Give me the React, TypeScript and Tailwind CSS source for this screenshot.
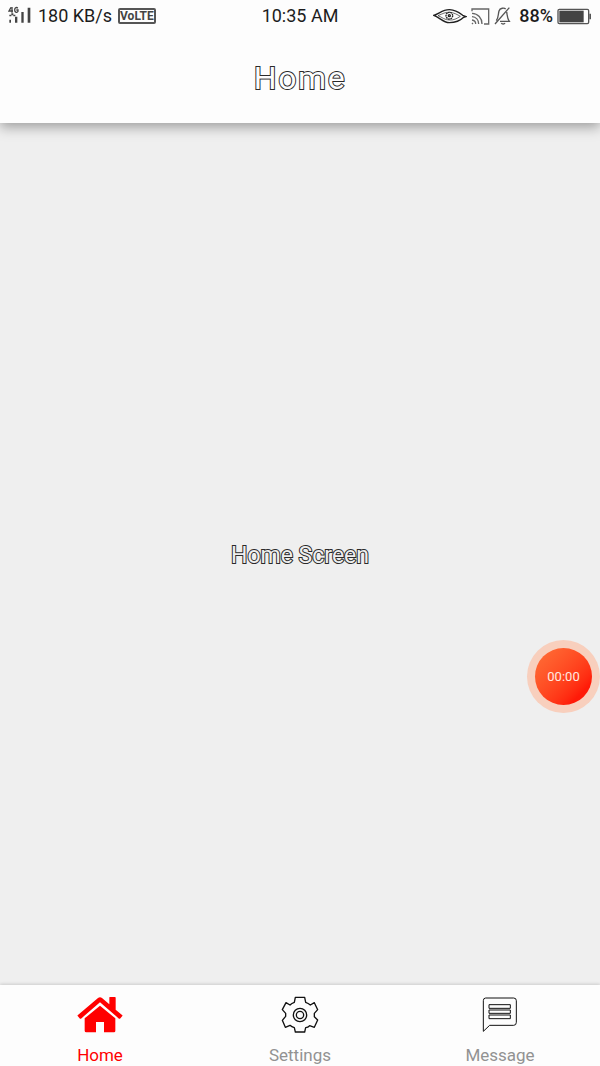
import type { ReactNode } from "react";

const outline = "antialiased [-webkit-text-stroke:2px_#2a2a2a] [paint-order:stroke_fill]";

function SignalIcon() {
  return (
    <svg width="24" height="20" viewBox="0 0 72 60" aria-label="4G signal" fill="#444">
      <path d="M9 4 3 15h12M12 3v17M29 7c-2-4-9-3-9 5s8 9 10 4v-4h-5" fill="none" stroke="#444" strokeWidth="4" />
      <path d="M4 26h6v5H4zM10 22h6v6h-6zM16 26h6v5h-6zM4 41h5v9H4zM21 32h7v18h-7zM40 18h7v32h-7zM59 5h8v45h-8z" />
    </svg>
  );
}

function EyeIcon() {
  return (
    <svg width="34" height="16" viewBox="0 0 102 48" fill="none" stroke="#222" strokeWidth="4" aria-hidden="true">
      <path d="M2 22C18 18 29 4 50 5c20 1 30 10 39 17l10 4-7 2C81 39 70 44 49 44 30 44 20 28 2 22Z" />
      <path d="M15 23C30 17 36 12 50 13s23 7 32 12c-11 7-20 12-33 11-14 0-21-8-34-13Z" strokeWidth="2" />
      <circle cx="49" cy="23" r="10" strokeDasharray="5 2" />
      <circle cx="49" cy="23" r="3" />
    </svg>
  );
}

function CastIcon() {
  return (
    <svg width="19" height="17" viewBox="0 0 57 51" fill="none" stroke="#666" strokeWidth="4" aria-hidden="true">
      <path d="M3 10V3h50v45H39M3 16c18 1 30 14 30 32M3 26c12 1 20 10 20 22M3 36c7 1 11 6 11 12M3 45l3 3" />
    </svg>
  );
}

function MutedBellIcon() {
  return (
    <svg width="17" height="18" viewBox="0 0 51 54" fill="none" stroke="#555" strokeWidth="4" aria-hidden="true">
      <path d="M46 2 3 51M35 6c-4-4-17-4-20 6-3 10-1 20-8 29M38 15c2 10 1 18 8 28H18M22 48c2 4 9 4 11 0" />
    </svg>
  );
}

function BatteryIcon() {
  return (
    <svg width="35" height="17" viewBox="0 0 105 51" aria-hidden="true">
      <rect x="3" y="4" width="92" height="43" rx="4" fill="#fdfdfd" stroke="#555" strokeWidth="4" />
      <path d="M7 8h73v35H7z" fill="#444" />
      <path d="M97 17h5v17h-5z" fill="#555" />
    </svg>
  );
}

function HomeIcon() {
  return (
    <svg width="46" height="38" viewBox="82 63 138 114" fill="red" aria-hidden="true">
      <path d="M84 121 145 69q6-5 12 0l22 19V67q0-1 2-1h15q2 0 2 2v36l20 17q1 1 0 2l-7 8q-2 1-3 0L151 82 94 131q-1 1-3 0l-7-8q-1-1 0-2Z" />
      <path d="m151 92 46 38v38q0 4-4 4h-30v-31h-24v31h-29q-5 0-5-5v-37Z" />
    </svg>
  );
}

function GearIcon() {
  return (
    <svg width="38" height="38" viewBox="93 61 114 114" fill="none" stroke="#111" strokeWidth="4" strokeLinejoin="round" aria-hidden="true">
      <path d="M136 65h28l3 15q8 3 14 8l12-7 10 21-10 11v10l10 10-10 22-14-5q-5 5-12 6l-3 13h-28l-3-13q-8-2-13-7l-14 6-9-21 10-12v-9l-10-11 11-21 12 7q5-5 13-8Z" />
      <circle cx="150" cy="118" r="20" />
      <circle cx="150" cy="118" r="11" />
    </svg>
  );
}

function MessageIcon() {
  return (
    <svg width="36" height="36" viewBox="97 64 108 108" fill="none" stroke="#111" strokeWidth="3" aria-hidden="true">
      <path d="M108 67h84q8 0 8 8v65q0 9-8 9h-72l-19 18V75q0-8 7-8Z" />
      <path d="M118 87h64v11h-64zM118 103h64v10h-64zM118 118h64v11h-64z" />
    </svg>
  );
}

function Tab({ label, active = false, children }: { label: string; active?: boolean; children: ReactNode }) {
  return (
    <a
      href={`#${label.toLowerCase()}`}
      aria-current={active ? "page" : undefined}
      className={`flex flex-1 flex-col items-center pt-2 pb-px ${active ? "text-[#ff0000]" : "text-[#929292]"}`}
    >
      <span className="flex h-11 items-center">{children}</span>
      <span className="mt-2 text-[17px] leading-5">{label}</span>
    </a>
  );
}

export default function App() {
  return (
    <div className="relative flex min-h-screen flex-col bg-[#efefef] font-[Roboto,sans-serif] antialiased">
      <header className="bg-[#fdfdfd] shadow-[0_4px_12px_rgba(0,0,0,0.35)]">
        <div className="grid h-8 grid-cols-[1fr_auto_1fr] items-center px-2 text-[18px] leading-5 text-[#1c1c1c]">
          <div className="flex items-center">
            <SignalIcon />
            <span className="ml-1.5">180 KB/s</span>
            <span className="ml-1.5 rounded-xs border-2 border-[#555] text-[12px] leading-3 font-bold text-[#444]">
              VoLTE
            </span>
          </div>
          <time>10:35 AM</time>
          <div className="flex items-center justify-end">
            <EyeIcon />
            <span className="ml-1"><CastIcon /></span>
            <span className="mr-2 ml-1"><MutedBellIcon /></span>
            <span className="font-medium">88%</span>
            <span className="ml-1"><BatteryIcon /></span>
          </div>
        </div>
        <h1 className={`pt-7 pb-[27px] text-center text-[32px] leading-9 tracking-wider text-[#fdfdfd] ${outline}`}>Home</h1>
      </header>

      <main className="flex flex-1 items-center justify-center pt-1">
        <p className={`text-[23px] leading-7 text-[#efefef] ${outline}`}>Home Screen</p>
      </main>

      <button
        type="button"
        aria-label="Recording time 00:00"
        className="absolute top-[640px] right-0 flex size-[73px] items-center justify-center rounded-full bg-[#f8cfbd]"
      >
        <span className="flex size-[57px] items-center justify-center rounded-full bg-linear-to-br from-[#ff7038] to-[#ff1a08] to-80% text-[13px] text-[#ffe9e0]">
          00:00
        </span>
      </button>

      <nav className="flex bg-[#fdfdfd] shadow-[0_-1px_3px_rgba(0,0,0,0.15)]">
        <Tab label="Home" active><HomeIcon /></Tab>
        <Tab label="Settings"><GearIcon /></Tab>
        <Tab label="Message"><MessageIcon /></Tab>
      </nav>
    </div>
  );
}
